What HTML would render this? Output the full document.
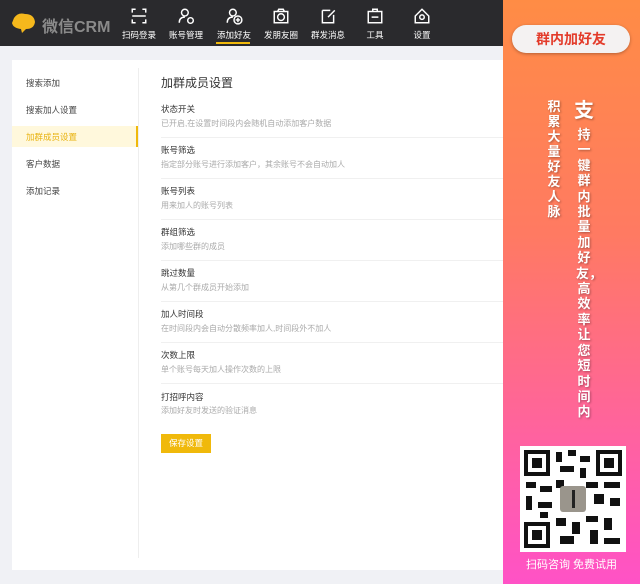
<!DOCTYPE html>
<html><head><meta charset="utf-8"><style>
*{margin:0;padding:0;box-sizing:border-box}
body{width:640px;height:584px;overflow:hidden;background:#f0f1f5;font-family:"Liberation Sans","Noto Sans CJK SC",sans-serif;position:relative}
.nav{position:absolute;left:0;top:0;width:640px;height:46px;background:#2a2a2d}
.logo{position:absolute;left:10px;top:12px}
.brand{position:absolute;left:42px;top:13px;color:#8a8a8a;font-size:16px;font-weight:bold}
.ni{position:absolute;top:0;width:48px;text-align:center;color:#fff;font-size:8.5px}
.ni svg{position:absolute;left:15px;top:7px}
.ni span{position:absolute;left:0;right:0;top:29px}
.ul{position:absolute;left:216px;top:42px;width:34px;height:2px;background:#f0b90b}
.card{position:absolute;left:12px;top:60px;width:500px;height:510px;background:#fff}
.side{position:absolute;left:26px;font-size:8.5px;color:#444}
.act{position:absolute;left:12px;top:126px;width:126px;height:21px;background:#fff8dc;border-right:2px solid #f0b90b}
.vd{position:absolute;left:138px;top:68px;width:1px;height:490px;background:#eee}
.t{position:absolute;left:161px;top:74px;font-size:12px;color:#333}
.lb{position:absolute;left:161px;font-size:8.5px;color:#333}
.ds{position:absolute;left:161px;font-size:8px;color:#aaa}
.hr{position:absolute;left:161px;width:345px;height:1px;background:#f0f0f0}
.btn{position:absolute;left:161px;top:434px;width:50px;height:19px;background:#f0b90b;color:#fff;font-size:8.5px;text-align:center;line-height:19px}
.panel{position:absolute;left:503px;top:0;width:137px;height:584px;background:linear-gradient(180deg,#ff8c45 0%,#ff7a62 40%,#ff62a0 75%,#ff52c6 100%)}
.pill{position:absolute;left:9px;top:25px;width:118px;height:28px;border-radius:14px;background:#f4f2f2;color:#e33b2a;font-weight:bold;font-size:14px;text-align:center;line-height:28px;box-shadow:0 1px 3px rgba(0,0,0,.3)}
.vc{position:absolute;color:#fff;font-weight:bold;font-size:13px;line-height:15px;width:16px;text-align:center;text-shadow:1px 1px 2px rgba(0,0,0,.35)}
.qr{position:absolute;left:17px;top:446px;width:106px;height:106px;background:#fff}
.cap{position:absolute;left:0;width:137px;top:556px;text-align:center;color:#fff;font-size:11px}
</style></head><body>
<div class="nav">
<svg class="logo" width="26" height="22" viewBox="0 0 26 22"><path d="M4 6 Q8 0 15 2 Q24 2 25 10 Q24 17 16 17 L12 21 L11 17 Q3 16 2 11 Z" fill="#f5b81c"/></svg>
<div class="brand">微信CRM</div>
<div class="ni" style="left:115px"><svg width="18" height="18" viewBox="0 0 16 16" fill="none" stroke="#fff" stroke-width="1.3"><path d="M2 5V2h3M11 2h3v3M14 11v3h-3M5 14H2v-3M2 8h12"/></svg><span>扫码登录</span></div>
<div class="ni" style="left:162px"><svg width="18" height="18" viewBox="0 0 16 16" fill="none" stroke="#fff" stroke-width="1.3"><circle cx="7" cy="5" r="3"/><path d="M2 14q0-5 5-5"/><circle cx="12" cy="12" r="2.5"/></svg><span>账号管理</span></div>
<div class="ni" style="left:210px"><svg width="18" height="18" viewBox="0 0 16 16" fill="none" stroke="#fff" stroke-width="1.3"><circle cx="7" cy="5" r="3"/><path d="M2 14q0-5 5-5"/><circle cx="11.5" cy="11.5" r="3.5"/><path d="M11.5 9.5v4M9.5 11.5h4"/></svg><span>添加好友</span></div>
<div class="ni" style="left:257px"><svg width="18" height="18" viewBox="0 0 16 16" fill="none" stroke="#fff" stroke-width="1.3"><rect x="2" y="4" width="12" height="10"/><circle cx="8" cy="9" r="3"/><path d="M5 4l1-2h4l1 2"/></svg><span>发朋友圈</span></div>
<div class="ni" style="left:304px"><svg width="18" height="18" viewBox="0 0 16 16" fill="none" stroke="#fff" stroke-width="1.3"><path d="M3 3h7M3 3v11h10V7M8 9l6-6"/></svg><span>群发消息</span></div>
<div class="ni" style="left:351px"><svg width="18" height="18" viewBox="0 0 16 16" fill="none" stroke="#fff" stroke-width="1.3"><rect x="2" y="4" width="12" height="10"/><path d="M6 4V2h4v2M5 9h6"/></svg><span>工具</span></div>
<div class="ni" style="left:398px"><svg width="18" height="18" viewBox="0 0 16 16" fill="none" stroke="#fff" stroke-width="1.3"><path d="M2 8l6-6 6 6v6H2z"/><circle cx="8" cy="9" r="2"/></svg><span>设置</span></div>
<div class="ul"></div>
</div>
<div class="card"></div>
<div class="act"></div>
<div class="vd"></div>
<div class="side" style="top:77px">搜索添加</div>
<div class="side" style="top:104px">搜索加人设置</div>
<div class="side" style="top:131px;color:#e8b20f">加群成员设置</div>
<div class="side" style="top:158px">客户数据</div>
<div class="side" style="top:185px">添加记录</div>
<div class="t">加群成员设置</div>
<div class="lb" style="top:103px">状态开关</div><div class="ds" style="top:118px">已开启,在设置时间段内会随机自动添加客户数据</div><div class="hr" style="top:137px"></div>
<div class="lb" style="top:144px">账号筛选</div><div class="ds" style="top:159px">指定部分账号进行添加客户，其余账号不会自动加人</div><div class="hr" style="top:178px"></div>
<div class="lb" style="top:185px">账号列表</div><div class="ds" style="top:200px">用来加人的账号列表</div><div class="hr" style="top:219px"></div>
<div class="lb" style="top:226px">群组筛选</div><div class="ds" style="top:241px">添加哪些群的成员</div><div class="hr" style="top:260px"></div>
<div class="lb" style="top:267px">跳过数量</div><div class="ds" style="top:282px">从第几个群成员开始添加</div><div class="hr" style="top:301px"></div>
<div class="lb" style="top:308px">加人时间段</div><div class="ds" style="top:323px">在时间段内会自动分散频率加人,时间段外不加人</div><div class="hr" style="top:342px"></div>
<div class="lb" style="top:349px">次数上限</div><div class="ds" style="top:364px">单个账号每天加人操作次数的上限</div><div class="hr" style="top:383px"></div>
<div class="lb" style="top:391px">打招呼内容</div><div class="ds" style="top:405px">添加好友时发送的验证消息</div>
<div class="btn">保存设置</div>
<div class="panel">
<div class="pill">群内加好友</div>
<div class="vc" style="left:71px;top:100px;font-size:20px;width:20px;line-height:22px">支</div>
<div class="vc" style="left:73px;top:127px;line-height:15.4px">持一键群内批量加好友，高效率让您短时间内</div>
<div class="vc" style="left:43px;top:99px">积累大量好友人脉</div>
<div class="qr"><svg width="106" height="106" viewBox="0 0 106 106">
<g fill="#111"><rect x="4" y="4" width="26" height="26"/><rect x="76" y="4" width="26" height="26"/><rect x="4" y="76" width="26" height="26"/></g>
<g fill="#fff"><rect x="8" y="8" width="18" height="18"/><rect x="80" y="8" width="18" height="18"/><rect x="8" y="80" width="18" height="18"/></g>
<g fill="#111"><rect x="12" y="12" width="10" height="10"/><rect x="84" y="12" width="10" height="10"/><rect x="12" y="84" width="10" height="10"/>
<rect x="36" y="6" width="6" height="10"/><rect x="48" y="4" width="8" height="6"/><rect x="60" y="10" width="10" height="6"/><rect x="40" y="20" width="14" height="6"/><rect x="60" y="22" width="6" height="10"/>
<rect x="6" y="36" width="10" height="6"/><rect x="20" y="40" width="12" height="6"/><rect x="6" y="50" width="6" height="14"/><rect x="18" y="56" width="14" height="6"/>
<rect x="36" y="34" width="8" height="8"/><rect x="66" y="36" width="12" height="6"/><rect x="84" y="36" width="16" height="6"/><rect x="74" y="48" width="10" height="10"/><rect x="90" y="52" width="10" height="8"/>
<rect x="36" y="72" width="10" height="8"/><rect x="52" y="76" width="8" height="12"/><rect x="66" y="70" width="12" height="6"/><rect x="84" y="72" width="8" height="12"/><rect x="70" y="84" width="8" height="14"/><rect x="40" y="90" width="14" height="8"/><rect x="84" y="92" width="16" height="6"/><rect x="20" y="66" width="8" height="6"/></g>
<rect x="40" y="40" width="26" height="26" rx="3" fill="#9a958c"/><rect x="52" y="44" width="3" height="18" fill="#222"/>
</svg></div>
<div class="cap">扫码咨询 免费试用</div>
</div>
</body></html>
